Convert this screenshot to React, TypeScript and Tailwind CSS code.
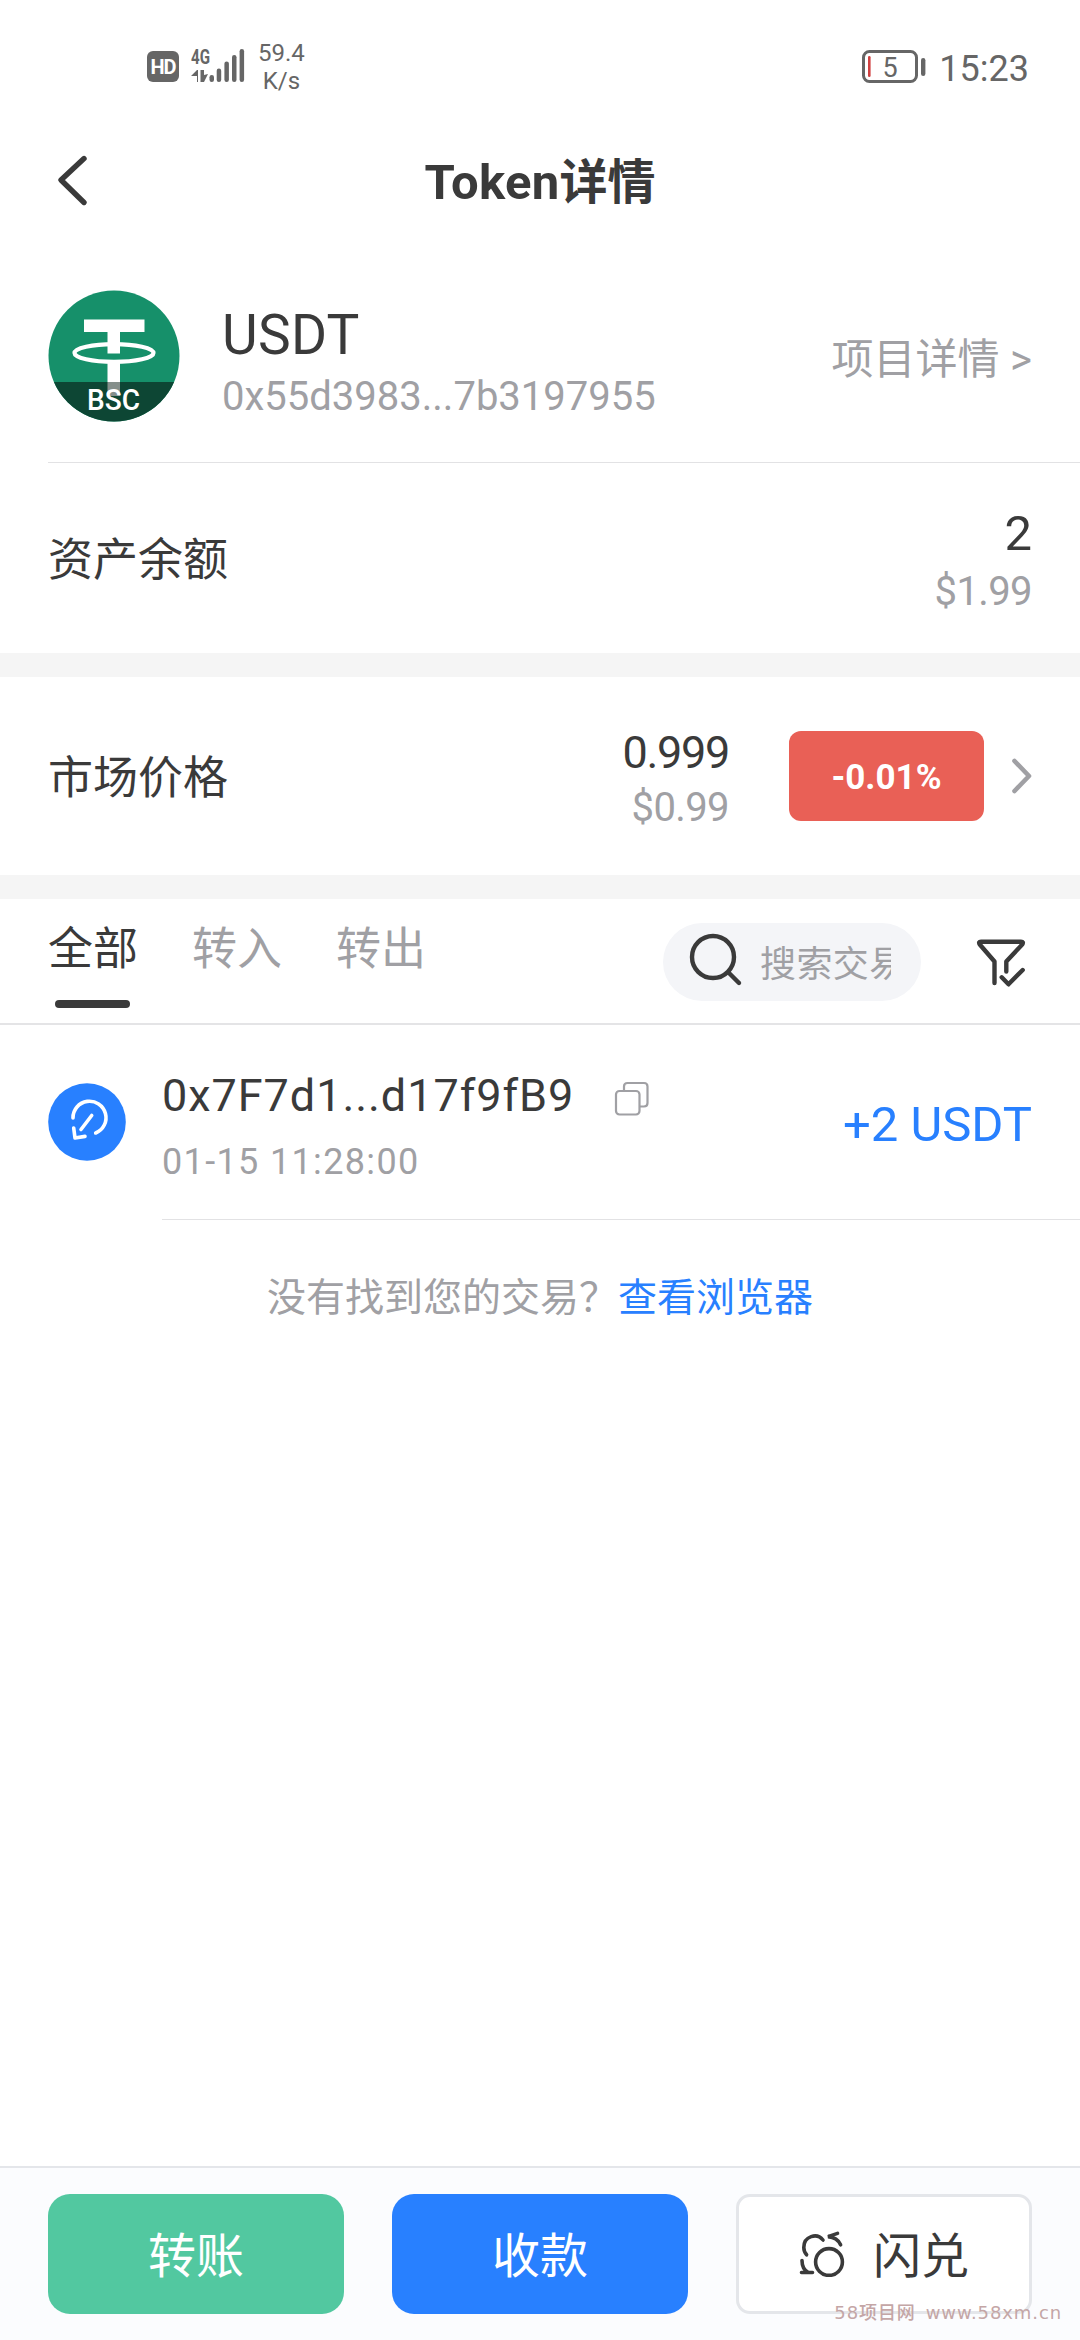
import type { ReactNode } from 'react';

const tabs = ['全部', '转入', '转出'];

function StatusBar() {
  return (
    <div className="h-[130px] pl-[147px] pr-[51px] pt-[38px] flex justify-between text-[#666666]">
      <div className="flex items-start">
        <span className="mt-[13px] w-8 h-[31px] rounded-md bg-[#666666] text-white text-[20px] leading-[32px] font-bold text-center tracking-[-1px]">
          HD
        </span>
        <svg className="ml-[11px] mt-[4px]" width="56" height="42" viewBox="0 -6 56 42" fill="currentColor">
          <text x="1" y="16" fontSize="21" fontWeight="700" textLength="19" lengthAdjust="spacingAndGlyphs">
            4G
          </text>
          <path d="M7 34V28H1L7 22H8V34Z" />
          <path d="M10.5 22H14V27L18 26L14 34H10.5Z" />
          <rect x="19.5" y="27" width="4.5" height="7" rx="2.2" />
          <rect x="26.7" y="20.5" width="4.5" height="13.5" rx="2.2" />
          <rect x="34.4" y="13.5" width="4.5" height="20.5" rx="2.2" />
          <rect x="42" y="7" width="4.5" height="27" rx="2.2" />
          <rect x="49.6" y="1" width="4.5" height="33" rx="2.2" />
        </svg>
        <div className="ml-3 mt-px text-[24px] leading-[28px] text-center">
          <div>59.4</div>
          <div>K/s</div>
        </div>
      </div>
      <div className="flex items-start">
        <svg className="mt-[12px]" width="64" height="34" viewBox="0 0 64 34" fill="none">
          <rect x="1.5" y="1.5" width="53" height="30" rx="6" stroke="#666666" strokeWidth="3" />
          <rect x="6" y="6" width="2.6" height="21" rx="1.3" fill="#d04040" />
          <rect x="59" y="8" width="4.4" height="18" rx="2.2" fill="#666666" />
          <text x="28" y="27" fontSize="27" textAnchor="middle" fill="#666666">
            5
          </text>
        </svg>
        <span className="ml-[13px] mt-[9px] text-[36px] leading-[44px]">15:23</span>
      </div>
    </div>
  );
}

function TokenLogo() {
  return (
    <svg width="132" height="132" viewBox="0 0 132 132">
      <defs>
        <clipPath id="coin">
          <circle cx="66" cy="66" r="65.5" />
        </clipPath>
      </defs>
      <g clipPath="url(#coin)">
        <rect width="132" height="132" fill="#16906a" />
        <ellipse cx="66" cy="63" rx="39.5" ry="8.8" fill="none" stroke="#fff" strokeWidth="4.2" />
        <path d="M36 29.5H96.5V42H72V63.5H59.5V42H36Z" fill="#fff" />
        <rect x="59.5" y="71" width="12.5" height="34" fill="#fff" />
        <rect y="92" width="132" height="40" fill="#0d4634" />
        <rect x="59.5" y="92" width="12.5" height="14" fill="#858f8b" />
        <text
          x="39"
          y="119.5"
          fontSize="29"
          fontWeight="500"
          fill="#fff"
          textLength="53"
          lengthAdjust="spacingAndGlyphs"
        >
          BSC
        </text>
      </g>
    </svg>
  );
}

function SwapIcon() {
  return (
    <svg width="46" height="46" viewBox="0 0 46 46" fill="none" stroke="#3a3a3a" strokeWidth="3.6" strokeLinecap="round">
      <circle cx="30" cy="31" r="13.4" />
      <path d="M24 9C18 1.5 4.8 5 4.8 16.5C4.8 20 6 22 7.6 23.8" />
      <path d="M38.5 2.4L29 5.6C35 6 39.5 9 41.6 13.8" />
      <path d="M3 29.5C3 35 5 39 9 41.4M2.5 41.5H13.5" />
    </svg>
  );
}

function Action({ className, children }: { className: string; children: ReactNode }) {
  return (
    <button className={`w-[296px] h-[120px] flex items-center justify-center text-[48px] ${className}`}>
      {children}
    </button>
  );
}

export default function App() {
  return (
    <div className="relative w-[1080px] h-[2340px] flex flex-col bg-white text-[#3a3a3a] font-[Roboto,'Noto_Sans_CJK_SC',sans-serif] whitespace-nowrap overflow-hidden">
      <StatusBar />

      <header className="h-[100px] grid grid-cols-[200px_1fr_200px] items-center">
        <svg className="ml-[55px]" width="34" height="54" viewBox="0 0 34 54" fill="none">
          <path d="M29 5.5L6 27L29 49.5" stroke="#3a3a3a" strokeWidth="5.4" strokeLinecap="round" strokeLinejoin="round" />
        </svg>
        <h1 className="text-center text-[48px] leading-[60px] font-bold pt-[5px]">
          <span className="text-[49px] tracking-[0.3px]">Token</span>详情
        </h1>
      </header>

      <section className="ml-12 h-[233px] pr-12 border-b border-[#e2e2e4] flex">
        <div className="pt-[60px]">
          <TokenLogo />
        </div>
        <div className="ml-[42px] pt-[70px] flex-1">
          <div className="text-[55px] leading-[70px] tracking-[0.3px]">USDT</div>
          <div className="mt-[2px] text-[40px] leading-[50px] text-[#a0a0a4]">0x55d3983...7b3197955</div>
        </div>
        <div className="pt-[103px] text-[42px] leading-[54px] text-[#a0a0a4]">项目详情 &gt;</div>
      </section>

      <section className="h-[190px] px-12 pt-[5px] flex items-center justify-between">
        <span className="text-[45px] leading-[60px]">资产余额</span>
        <div className="text-right pt-[1px]">
          <div className="text-[49px] leading-[62px]">2</div>
          <div className="text-[40px] leading-[54px] tracking-[-0.6px] text-[#a0a0a4]">$1.99</div>
        </div>
      </section>
      <div className="h-6 bg-[#f5f5f5]" />

      <section className="h-[198px] pl-12 pr-[46px] flex items-center">
        <span className="flex-1 text-[45px] leading-[60px] pt-[5px]">市场价格</span>
        <div className="text-right pt-[7px]">
          <div className="text-[45px] leading-[56px] tracking-[-1.3px]">0.999</div>
          <div className="text-[40px] leading-[54px] tracking-[-0.6px] text-[#a0a0a4]">$0.99</div>
        </div>
        <div className="ml-[60px] w-[195px] h-[90px] rounded-xl bg-[#e96056] text-white text-[35px] font-bold flex items-center justify-center pt-[4px]">
          -0.01%
        </div>
        <svg className="ml-[24px]" width="26" height="38" viewBox="0 0 26 38" fill="none">
          <path d="M6.5 4L21 19L6.5 34" stroke="#a0a0a4" strokeWidth="4.6" strokeLinecap="round" strokeLinejoin="round" />
        </svg>
      </section>
      <div className="h-6 bg-[#f5f5f5]" />

      <nav className="h-[126px] pl-12 pr-12 border-b-2 border-[#e4e4e6] flex items-start">
        <div className="flex gap-[54px] pt-[21px]">
          {tabs.map((tab, i) => (
            <div key={tab} className="flex flex-col items-center">
              <span className={`text-[45px] leading-[60px] ${i === 0 ? '' : 'text-[#a0a0a4]'}`}>{tab}</span>
              {i === 0 && <span className="mt-[20px] mr-px w-[75px] h-2 rounded-full bg-[#3a3a3a]" />}
            </div>
          ))}
        </div>
        <div className="ml-auto mt-6 w-[258px] h-[78px] rounded-full bg-[#f4f5f8] flex items-center">
          <svg className="ml-[24px] -mt-1" width="58" height="58" viewBox="0 0 58 58" fill="none" stroke="#3a3a3a" strokeWidth="4.4" strokeLinecap="round">
            <circle cx="26" cy="26" r="21" />
            <path d="M41.5 41.5L52 52" />
          </svg>
          <span className="ml-[15px] w-[131px] overflow-hidden text-[36px] leading-[50px] tracking-[0.4px] text-[#a0a0a4] pt-[6px]">
            搜索交易
          </span>
        </div>
        <svg
          className="ml-[51px] mt-[35px]"
          width="60"
          height="60"
          viewBox="0 0 60 60"
          fill="none"
          stroke="#3a3a3a"
          strokeWidth="4.4"
          strokeLinecap="round"
          strokeLinejoin="round"
        >
          <path d="M22.5 49V27.5L7.8 10.5Q6 7.7 9 7.7H49Q52 7.7 50.2 10.5L34.3 27.5V37.5" />
          <path d="M29.7 43.3L36.5 50.3L50.7 36" />
        </svg>
      </nav>

      <section className="pl-12 flex">
        <svg className="mt-[58px]" width="78" height="78" viewBox="0 0 78 78" fill="none">
          <circle cx="39" cy="39" r="38.8" fill="#2880ff" />
          <g stroke="#fff" strokeWidth="3.6" strokeLinecap="round" strokeLinejoin="round">
            <path d="M25 35A16.5 16.5 0 1 1 47.7 50" />
            <path d="M43.7 32.5L33 46.5" />
            <path d="M25.7 45L27 55L37 53.4" />
          </g>
        </svg>
        <div className="ml-[36px] flex-1 h-[195px] pr-12 border-b border-[#e2e2e4] flex">
          <div>
            <div className="mt-[41px] flex items-center">
              <span className="text-[45px] leading-[60px] tracking-[0.95px]">0x7F7d1...d17f9fB9</span>
              <svg className="ml-[40px] mt-[6px]" width="36" height="36" viewBox="0 0 36 36" fill="none" stroke="#a0a0a4" strokeWidth="2.2">
                <rect x="2" y="10" width="23.5" height="23.5" rx="3.5" />
                <path d="M10 10V5.5Q10 2 13.5 2H30Q33.5 2 33.5 5.5V22Q33.5 25.5 30 25.5H25.5" />
              </svg>
            </div>
            <div className="mt-[13px] text-[36px] leading-[46px] tracking-[1.35px] text-[#a0a0a4]">01-15 11:28:00</div>
          </div>
          <div className="ml-auto mt-[69px] text-[49px] leading-[62px] text-[#2880ff]">+2 USDT</div>
        </div>
      </section>

      <p className="mt-[51px] text-center text-[39px] leading-[54px] text-[#a0a0a4]">
        没有找到您的交易？<a className="text-[#2880ff]">查看浏览器</a>
      </p>

      <footer className="mt-auto h-[174px] px-12 pt-[26px] border-t-2 border-[#e4e6ea] bg-[#fbfcfe] flex gap-12">
        <Action className="rounded-[22px] bg-[#52c8a0] text-white pt-[5px]">转账</Action>
        <Action className="rounded-[22px] bg-[#2880ff] text-white pt-[5px]">收款</Action>
        <Action className="rounded-[14px] border-[3px] border-[#e4e6ea] bg-white gap-[28px]">
          <SwapIcon />
          <span className="pt-[5px]">闪兑</span>
        </Action>
      </footer>

      <div className="absolute right-[18px] bottom-[16px] flex gap-[10px] text-[18px] leading-[22px] text-[#c4a6a6] font-['DejaVu_Sans','Noto_Sans_CJK_SC',sans-serif] font-medium">
        <span className="tracking-[0.9px]">58项目网</span>
        <span className="tracking-[0.9px]">www.58xm.cn</span>
      </div>
    </div>
  );
}
